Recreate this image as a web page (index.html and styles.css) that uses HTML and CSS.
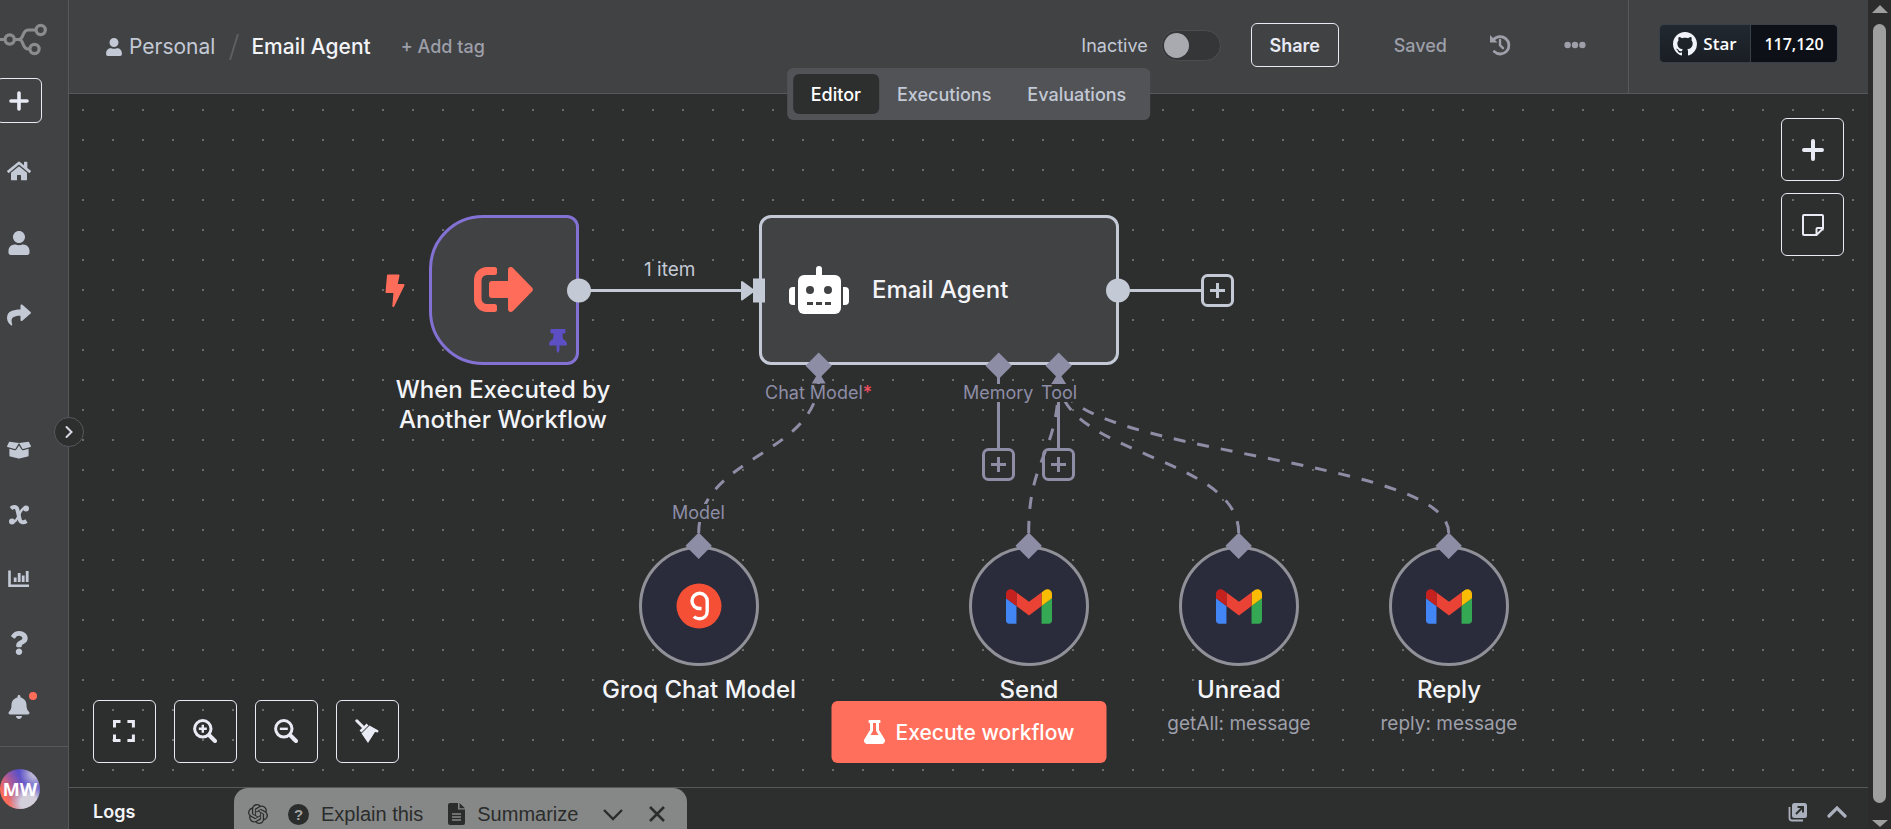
FILE: index.html
```html
<!DOCTYPE html>
<html lang="en">
<head>
<meta charset="utf-8">
<title>Email Agent</title>
<link rel="stylesheet" href="styles.css">
</head>
<body>
<div class="app">
  <aside class="sidebar">
    <nav class="rail" aria-label="Main">
      <svg class="logo" viewBox="0 0 48 36" fill="none" stroke="#8c8c8c" stroke-width="3.2"><circle cx="9.7" cy="19.500" r="4.6"/><circle cx="40.7" cy="10" r="4.6"/><circle cx="34.5" cy="29" r="4.6"/><path d="M-2 19.500H5M14.300 19.500H19c5 0 3-9.500 9-9.500h8M19 19.500c5 0 3 9.500 9 9.500h2"/></svg>
      <button class="rail-add" aria-label="Create"><svg class="i20" viewBox="0 0 20 20"><path d="M10 2v16M2 10h16" stroke="#e8eaf4" stroke-width="3.6" stroke-linecap="round"/></svg></button>
      <a class="rail-item main-item" href="#" aria-label="Overview"><svg class="i24" viewBox="0 0 576 512"><path d="M280.370 148.260L96 300.110V464a16 16 0 0 0 16 16l112.060-.290a16 16 0 0 0 15.920-16V368a16 16 0 0 1 16-16h64a16 16 0 0 1 16 16v95.640a16 16 0 0 0 16 16.050L464 480a16 16 0 0 0 16-16V300L295.670 148.260a12.190 12.190 0 0 0-15.300 0zM571.600 251.470L488 182.560V44.050a12 12 0 0 0-12-12h-56a12 12 0 0 0-12 12v72.610L318.470 43a48 48 0 0 0-61 0L4.340 251.470a12 12 0 0 0-1.600 16.900l25.500 31A12 12 0 0 0 45.150 301l235.220-193.740a12.190 12.190 0 0 1 15.300 0L530.900 301a12 12 0 0 0 16.900-1.600l25.500-31a12 12 0 0 0-1.700-16.930z"/></svg></a>
      <a class="rail-item main-item" href="#" aria-label="Personal"><svg class="i24" viewBox="0 0 448 512"><path d="M224 256c70.700 0 128-57.300 128-128S294.700 0 224 0 96 57.300 96 128s57.300 128 128 128zm89.600 32h-16.700c-22.200 10.200-46.900 16-72.900 16s-50.600-5.800-72.900-16h-16.700C60.200 288 0 348.200 0 422.400V464c0 26.500 21.500 48 48 48h352c26.500 0 48-21.500 48-48v-41.600c0-74.200-60.200-134.400-134.400-134.400z"/></svg></a>
      <a class="rail-item main-item" href="#" aria-label="Shared with you"><svg class="i24" viewBox="0 0 512 512"><path d="M503.691 189.836L327.687 37.851C312.281 24.546 288 35.347 288 56.015v80.053C127.371 137.907 0 170.100 0 322.326c0 61.441 39.581 122.309 83.333 154.132 13.653 9.931 33.111-2.533 28.077-18.631C66.066 312.814 132.917 274.316 288 272.085V360c0 20.700 24.300 31.453 39.687 18.164l176.004-152c11.071-9.562 11.086-26.753 0-36.328z"/></svg></a>
      <span class="spacer"></span>
      <a class="rail-item" href="#" aria-label="Templates"><svg class="i24" viewBox="0 20 640 512"><path d="M425.700 256c-16.900 0-32.800-9-41.400-23.400L320 126l-64.200 106.600c-8.700 14.500-24.600 23.500-41.500 23.500-4.500 0-9-.6-13.300-1.900L64 215v178c0 14.700 10 27.500 24.200 31l216.200 54.100c10.200 2.500 20.900 2.500 31 0L551.800 424c14.200-3.600 24.200-16.400 24.200-31V215l-137 39.100c-4.300 1.300-8.800 1.900-13.300 1.900zm212.600-112.200L586.800 41c-3.100-6.200-9.800-9.800-16.700-8.900L320 64l91.700 152.100c3.800 6.300 11.400 9.300 18.500 7.300l197.900-56.500c9.900-2.900 14.700-13.900 10.200-23.100zM53.200 41L1.700 143.800c-4.600 9.200.3 20.200 10.100 23l197.900 56.500c7.100 2 14.700-1 18.500-7.300L320 64 69.800 32.100c-6.900-.8-13.500 2.700-16.600 8.900z"/></svg></a>
      <a class="rail-item" href="#" aria-label="Variables"><svg class="i20" viewBox="0 0 20 20"><path d="M2 3.500C4.500 1.200 7.600 1.500 8.400 4.800l2.300 9.600c.8 3.300 3.800 3.600 6.800 1.600" fill="none" stroke="#c3c9d5" stroke-width="4"/><path d="M16.500 3c-3-.5-4.500 3-6.500 7s-3.500 7.500-6.500 7" fill="none" stroke="#c3c9d5" stroke-width="2.200"/><circle cx="17" cy="3.600" r="3"/><circle cx="3" cy="16.600" r="3"/></svg></a>
      <a class="rail-item" href="#" aria-label="Insights"><svg class="i22" viewBox="0 0 22 22"><path d="M1.500 2.500v15.300h19.500" fill="none" stroke="#c3c9d5" stroke-width="2.600"/><path d="M7.200 14v-4.500M11.200 14v-9M15.200 14v-6.500M19.200 14v-11" fill="none" stroke="#c3c9d5" stroke-width="2.800"/></svg></a>
      <a class="rail-item" href="#" aria-label="Help"><svg class="i24" viewBox="0 0 384 512"><path d="M202.021 0C122.202 0 70.503 32.703 29.914 91.026c-7.363 10.580-5.093 25.086 5.178 32.874l43.138 32.709c10.373 7.865 25.132 6.026 33.253-4.148 25.049-31.381 43.630-49.449 82.757-49.449 30.764 0 68.816 19.799 68.816 49.631 0 22.552-18.617 34.134-48.993 51.164-35.423 19.860-82.299 44.576-82.299 106.405V320c0 13.255 10.745 24 24 24h72.471c13.255 0 24-10.745 24-24v-5.773c0-42.860 125.268-44.645 125.268-160.627C377.504 66.256 286.902 0 202.021 0zM192 373.459c-38.196 0-69.271 31.075-69.271 69.271 0 38.195 31.075 69.270 69.271 69.270s69.271-31.075 69.271-69.271-31.075-69.270-69.271-69.270z"/></svg></a>
      <a class="rail-item bell" href="#" aria-label="What's new"><svg class="i24" viewBox="0 0 448 512"><path d="M224 512c35.320 0 63.970-28.650 63.970-64H160.030c0 35.350 28.650 64 63.970 64zm215.390-149.710c-19.320-20.760-55.470-51.990-55.470-154.290 0-77.700-54.480-139.900-127.940-155.160V32c0-17.670-14.320-32-31.980-32s-31.980 14.330-31.980 32v20.840C118.560 68.100 64.080 130.300 64.080 208c0 102.300-36.150 133.530-55.470 154.290-6 6.450-8.660 14.160-8.610 21.710.110 16.400 12.980 32 32.100 32h383.800c19.120 0 32-15.600 32.100-32 .050-7.550-2.610-15.270-8.610-21.710z"/></svg><span class="badge"></span></a>
    </nav>
    <div class="account"><button class="avatar">MW</button></div>
    <button class="expand" aria-label="Expand sidebar"><svg class="i14" viewBox="0 0 14 14"><path d="M4.500 2l5 5-5 5" fill="none" stroke="#d6d9e3" stroke-width="2" stroke-linecap="round"/></svg></button>
  </aside>

  <div class="workspace">
    <header class="topbar">
      <div class="crumbs">
        <a class="owner" href="#"><svg class="i18" viewBox="0 0 448 512"><path d="M224 256c70.700 0 128-57.300 128-128S294.700 0 224 0 96 57.300 96 128s57.300 128 128 128zm89.600 32h-16.700c-22.200 10.200-46.900 16-72.900 16s-50.600-5.800-72.900-16h-16.700C60.200 288 0 348.200 0 422.400V464c0 26.500 21.500 48 48 48h352c26.500 0 48-21.500 48-48v-41.600c0-74.200-60.200-134.400-134.400-134.400z"/></svg>Personal</a>
        <svg class="slash" viewBox="0 0 10 26"><path d="M9 0L1 26" stroke="#5e5f62" stroke-width="2"/></svg>
        <h1 class="title">Email Agent</h1>
        <button class="add-tag">+ Add tag</button>
      </div>
      <div class="actions">
        <label class="active-toggle" for="active">Inactive<input class="switch" id="active" type="checkbox"></label>
        <button class="share">Share</button>
        <span class="saved">Saved</span>
        <button class="icon-btn history" aria-label="History"><svg class="i22" viewBox="0 0 22 22" fill="none" stroke="#9d9fa9" stroke-width="2.800"><path d="M4.300 6A8.700 8.700 0 1 1 5.200 17.600" stroke-linecap="round"/><path d="M11 6v5.200l3 3" stroke-width="2.400" stroke-linecap="round"/><path d="M1 1v7.500h7.500z" fill="#9d9fa9" stroke="none"/></svg></button>
        <button class="icon-btn" aria-label="More"><svg class="i22" viewBox="0 0 22 22" fill="#9d9fa9"><circle cx="3.600" cy="11" r="3.200"/><circle cx="11" cy="11" r="3.200"/><circle cx="18.400" cy="11" r="3.200"/></svg></button>
      </div>
      <div class="github">
        <a class="gh-star" href="#"><svg class="i24" viewBox="0 0 16 16"><path fill="#f0f3f9" d="M8 0C3.580 0 0 3.580 0 8c0 3.540 2.290 6.530 5.470 7.590.4.070.55-.170.55-.380 0-.190-.010-.820-.010-1.490-2.010.370-2.530-.490-2.690-.940-.090-.230-.480-.940-.820-1.130-.280-.150-.680-.520-.010-.530.630-.010 1.080.580 1.230.820.720 1.210 1.870.870 2.330.660.070-.520.280-.870.510-1.070-1.780-.200-3.640-.890-3.640-3.950 0-.870.310-1.590.820-2.150-.080-.200-.360-1.020.080-2.120 0 0 .670-.210 2.200.820.640-.180 1.320-.270 2-.270.680 0 1.360.090 2 .270 1.530-1.040 2.200-.820 2.200-.820.440 1.100.160 1.920.080 2.120.510.560.820 1.270.820 2.150 0 3.070-1.870 3.750-3.650 3.950.290.250.540.730.540 1.480 0 1.070-.010 1.930-.010 2.200 0 .210.150.460.550.380A8.010 8.010 0 0 0 16 8c0-4.420-3.580-8-8-8z"/></svg>Star</a><a class="gh-count" href="#">117,120</a>
      </div>
    </header>

    <div class="tabs">
      <button class="tab active">Editor</button><button class="tab">Executions</button><button class="tab">Evaluations</button>
    </div>

    <main class="canvas">
      <svg class="edges" width="1799" height="693" viewBox="69 94 1799 693" fill="none">
        <g stroke="#c3c9d5" stroke-width="3"><path d="M590 290.500H744M1130 290.500H1201"/><rect x="1202.500" y="275.500" width="30" height="30" rx="5"/><path d="M1210 290.500h15M1217.500 283v15"/></g>
        <path d="M742 282v17.500l12-8.700z" fill="#c3c9d5" stroke="#c3c9d5" stroke-width="2" stroke-linejoin="round"/>
        <g stroke="#8d8da6" stroke-width="3">
          <g stroke-dasharray="12 12">
            <path d="M698.700 533C698.700 455.500 818.700 455.500 818.700 378"/>
            <path d="M1028.700 533C1028.700 455.500 1058.700 455.500 1058.700 378"/>
            <path d="M1238.700 533C1238.700 455.500 1058.700 455.500 1058.700 378"/>
            <path d="M1448.700 533C1448.700 455.500 1058.700 455.500 1058.700 378"/>
          </g>
          <path d="M998.500 376V449M1058.500 400V449"/>
          <rect x="983.500" y="449.500" width="30" height="30" rx="5"/><path d="M991 464.500h15M998.500 457v15"/>
          <rect x="1043.500" y="449.500" width="30" height="30" rx="5"/><path d="M1051 464.500h15M1058.500 457v15"/>
        </g>
        <path d="M818.700 372l7 11.500h-14zM1058.700 372l7.500 12h-15z" fill="#8d8da6"/>
      </svg>

      <svg class="bolt" viewBox="0 0 20 33"><path d="M3 1.500h10.500L11.500 11h7L8.300 32l1.200-14H1.500z" fill="#ff6d5a" stroke="#ff6d5a" stroke-width="2" stroke-linejoin="round"/></svg>

      <section class="node trigger">
        <svg class="trigger-icon" viewBox="0 0 60 46" fill="#ff6d5a"><path d="M20.500 0H13A13 13 0 0 0 0 13v19a13 13 0 0 0 13 13h7.500a2.500 2.500 0 0 0 2.500-2.500v-3A2.500 2.500 0 0 0 20.500 37H13a5.500 5.500 0 0 1-5.500-5.500v-18A5.500 5.500 0 0 1 13 8h7.500A2.500 2.500 0 0 0 23 5.500v-3A2.500 2.500 0 0 0 20.500 0z"/><path d="M18 14h16V3c0-3 3-4 5-2l19 19.500a3 3 0 0 1 0 4L39 44c-2 2-5 1-5-2V31H18a3 3 0 0 1-3-3V17a3 3 0 0 1 3-3z"/></svg>
        <svg class="pin" viewBox="0 0 384 512" fill="#5c4fc4"><path d="M298.028 214.267L285.793 96H328c13.255 0 24-10.745 24-24V24c0-13.255-10.745-24-24-24H56C42.745 0 32 10.745 32 24v48c0 13.255 10.745 24 24 24h42.207L85.972 214.267C37.465 236.820 0 277.261 0 328c0 13.255 10.745 24 24 24h136v104.007c0 1.242.289 2.467.845 3.578l24 48c2.941 5.882 11.364 5.893 14.311 0l24-48a8.008 8.008 0 0 0 .845-3.578V352h136c13.255 0 24-10.745 24-24-.001-51.183-37.983-91.420-85.973-113.733z"/></svg>
      </section>
      <p class="node-label trigger-label">When Executed by Another Workflow</p>
      <span class="item-count">1 item</span>

      <section class="node agent">
        <svg class="robot" viewBox="0 0 62 50" fill="#fff"><rect x="28" y="1" width="6" height="14" rx="3"/><path d="M16 10h31a6 6 0 0 1 6 6v27a6 6 0 0 1-6 6H16a6 6 0 0 1-6-6V16a6 6 0 0 1 6-6z"/><path d="M7 22v18H5a4 4 0 0 1-4-4V26a4 4 0 0 1 4-4zM55 22v18h2a4 4 0 0 0 4-4V26a4 4 0 0 0-4-4z"/><g fill="#414244"><circle cx="22" cy="25" r="4"/><circle cx="40" cy="25" r="4"/><path d="M19 37h6v3h-6zM28 37h6v3h-6zM37 37h6v3h-6z"/></g></svg>
        <span class="agent-name">Email Agent</span>
      </section>
      <span class="port chat-model">Chat Model<b class="required">*</b></span>
      <span class="port memory">Memory</span>
      <span class="port tool">Tool</span>
      <span class="port model">Model</span>

      <section class="sub groq">
        <div class="disc"><svg class="groq-icon" viewBox="0 0 46 46"><circle cx="23" cy="23" r="22.500" fill="#f55036"/><path d="M25.500 25.500h-2A7.600 7.600 0 1 1 31.200 18v10c0 5-3.500 7.700-7.700 7.700-2.200 0-4.200-.7-5.500-2.200" fill="none" stroke="#fff" stroke-width="3.400"/></svg></div>
        <p class="node-label">Groq Chat Model</p>
      </section>
      <section class="sub send">
        <div class="disc"><svg class="gmail" viewBox="52 42 88 66"><path fill="#4285f4" d="M58 108h14V74L52 59v43c0 3.320 2.690 6 6 6"/><path fill="#34a853" d="M120 108h14c3.320 0 6-2.690 6-6V59l-20 15"/><path fill="#fbbc04" d="M120 48v26l20-15v-8c0-7.420-8.470-11.650-14.400-7.200"/><path fill="#ea4335" d="M72 74V48l24 18 24-18v26L96 92"/><path fill="#c5221f" d="M52 51v8l20 15V48l-5.600-4.200c-5.940-4.450-14.400-.22-14.400 7.200"/></svg></div>
        <p class="node-label">Send</p>
      </section>
      <section class="sub unread">
        <div class="disc"><svg class="gmail" viewBox="52 42 88 66"><path fill="#4285f4" d="M58 108h14V74L52 59v43c0 3.320 2.690 6 6 6"/><path fill="#34a853" d="M120 108h14c3.320 0 6-2.690 6-6V59l-20 15"/><path fill="#fbbc04" d="M120 48v26l20-15v-8c0-7.420-8.470-11.650-14.400-7.200"/><path fill="#ea4335" d="M72 74V48l24 18 24-18v26L96 92"/><path fill="#c5221f" d="M52 51v8l20 15V48l-5.600-4.200c-5.940-4.450-14.400-.22-14.400 7.200"/></svg></div>
        <p class="node-label">Unread</p>
        <p class="node-sub">getAll: message</p>
      </section>
      <section class="sub reply">
        <div class="disc"><svg class="gmail" viewBox="52 42 88 66"><path fill="#4285f4" d="M58 108h14V74L52 59v43c0 3.320 2.690 6 6 6"/><path fill="#34a853" d="M120 108h14c3.320 0 6-2.690 6-6V59l-20 15"/><path fill="#fbbc04" d="M120 48v26l20-15v-8c0-7.420-8.470-11.650-14.400-7.200"/><path fill="#ea4335" d="M72 74V48l24 18 24-18v26L96 92"/><path fill="#c5221f" d="M52 51v8l20 15V48l-5.600-4.200c-5.940-4.450-14.400-.22-14.400 7.200"/></svg></div>
        <p class="node-label">Reply</p>
        <p class="node-sub">reply: message</p>
      </section>

      <svg class="edges" width="1799" height="693" viewBox="69 94 1799 693">
        <g fill="#c3c9d5"><circle cx="579" cy="290.500" r="12"/><circle cx="1118" cy="290.500" r="12"/><rect x="753" y="278.500" width="12" height="24"/></g>
        <path fill="#8d8da6" d="M818.700 352.500l13.200 13.200-13.200 13.200-13.200-13.200zM998.700 352.500l13.200 13.200-13.200 13.200-13.200-13.200zM1058.700 352.500l13.200 13.200-13.200 13.200-13.200-13.200zM698.700 532.500l13.200 13.200-13.200 13.200-13.200-13.200zM1028.700 532.500l13.200 13.200-13.200 13.200-13.200-13.200zM1238.700 532.500l13.200 13.200-13.200 13.200-13.200-13.200zM1448.700 532.500l13.200 13.200-13.200 13.200-13.200-13.200z"/>
      </svg>

      <div class="side-tools">
        <button class="tool-btn" aria-label="Add node"><svg class="i22" viewBox="0 0 22 22"><path d="M11 2v18M2 11h18" stroke="#e8eaf4" stroke-width="4" stroke-linecap="round"/></svg></button>
        <button class="tool-btn" aria-label="Add sticky note"><svg class="i22" viewBox="0 0 22 22" fill="none" stroke="#e8eaf4" stroke-width="2"><path d="M2 1h18a1 1 0 0 1 1 1v12.500L14.500 21H2a1 1 0 0 1-1-1V2a1 1 0 0 1 1-1zM21 14h-5.500a1 1 0 0 0-1 1v6"/></svg></button>
      </div>
      <div class="zoom-tools">
        <button class="tool-btn" aria-label="Fit view"><svg class="i22" viewBox="0 0 22 22" fill="none" stroke="#e8eaf4" stroke-width="3"><path d="M1.500 7.500V1.500h6M14.400 1.500h6v6M1.500 14.500v6h6M14.400 20.500h6v-6"/></svg></button>
        <button class="tool-btn" aria-label="Zoom in"><svg class="i24" viewBox="0 0 24 24" fill="none" stroke="#e8eaf4"><circle cx="9.800" cy="9.800" r="8.200" stroke-width="3"/><path d="M16.500 16.500l5.500 5.500" stroke-width="4" stroke-linecap="round"/><path d="M9.800 5.800v8M5.800 9.800h8" stroke-width="2.400"/></svg></button>
        <button class="tool-btn" aria-label="Zoom out"><svg class="i24" viewBox="0 0 24 24" fill="none" stroke="#e8eaf4"><circle cx="9.800" cy="9.800" r="8.200" stroke-width="3"/><path d="M16.500 16.500l5.500 5.500" stroke-width="4" stroke-linecap="round"/><path d="M5.800 9.800h8" stroke-width="2.400"/></svg></button>
        <button class="tool-btn" aria-label="Tidy up"><svg class="i24" viewBox="0 0 24 24"><path d="M1.800 1.800l6 6" stroke="#e8eaf4" stroke-width="3" stroke-linecap="round"/><path d="M12.500 5.500L5.500 12.500" stroke="#e8eaf4" stroke-width="2.600"/><path d="M14.500 6.500l9 5-.5 2-3-.5-7 11L6.500 14.500z" fill="#e8eaf4"/></svg></button>
      </div>
      <button class="execute"><svg class="i24" viewBox="0 0 448 512" fill="#fff"><path d="M437.200 403.500L320 215V64h8c13.300 0 24-10.700 24-24V24c0-13.300-10.700-24-24-24H120c-13.300 0-24 10.700-24 24v16c0 13.300 10.700 24 24 24h8v151L10.800 403.500C-18.500 450.600 15.300 512 70.900 512h306.200c55.700 0 89.400-61.500 60.100-108.500zM137.900 320l48.200-77.600c3.700-5.200 5.800-11.600 5.800-18.400V64h64v160c0 6.900 2.200 13.200 5.800 18.400l48.200 77.600h-172z"/></svg>Execute workflow</button>
    </main>

    <footer class="logs">
      <span class="logs-title">Logs</span>
      <div class="assist">
        <svg class="i20" viewBox="0 0 24 24" fill="#2b2c2c"><path d="M22.282 9.821a5.985 5.985 0 0 0-.516-4.911 6.046 6.046 0 0 0-6.510-2.900A6.065 6.065 0 0 0 4.981 4.182a5.985 5.985 0 0 0-3.998 2.900 6.046 6.046 0 0 0 .743 7.097 5.980 5.980 0 0 0 .511 4.911 6.051 6.051 0 0 0 6.515 2.900A5.985 5.985 0 0 0 13.260 24a6.056 6.056 0 0 0 5.772-4.206 5.989 5.989 0 0 0 3.998-2.900 6.056 6.056 0 0 0-.748-7.073zm-9.022 12.608a4.476 4.476 0 0 1-2.876-1.041l.142-.080 4.778-2.758a.795.795 0 0 0 .393-.681v-6.737l2.020 1.169a.071.071 0 0 1 .038.052v5.583a4.504 4.504 0 0 1-4.495 4.494zm-9.661-4.125a4.471 4.471 0 0 1-.535-3.014l.142.085 4.783 2.758a.771.771 0 0 0 .781 0l5.843-3.369v2.332a.080.080 0 0 1-.033.062L9.740 19.950a4.499 4.499 0 0 1-6.141-1.646zM2.341 7.896a4.485 4.485 0 0 1 2.366-1.973V11.600a.766.766 0 0 0 .388.677l5.814 3.354-2.020 1.169a.076.076 0 0 1-.071 0l-4.830-2.787A4.504 4.504 0 0 1 2.341 7.872zm16.596 3.856L13.104 8.364 15.119 7.200a.076.076 0 0 1 .071 0l4.830 2.791a4.494 4.494 0 0 1-.677 8.104v-5.677a.790.790 0 0 0-.407-.667zm2.011-3.023l-.142-.085-4.774-2.782a.776.776 0 0 0-.785 0L9.409 9.230V6.897a.066.066 0 0 1 .028-.062l4.830-2.787a4.499 4.499 0 0 1 6.680 4.660zM8.307 12.863l-2.020-1.164a.080.080 0 0 1-.038-.057V6.074a4.499 4.499 0 0 1 7.376-3.454l-.142.081L8.704 5.459a.795.795 0 0 0-.393.681zm1.098-2.365l2.602-1.500 2.607 1.500v2.999l-2.597 1.500-2.607-1.500Z"/></svg>
        <button class="assist-btn"><span class="q-dot">?</span>Explain this</button>
        <button class="assist-btn"><svg class="doc" viewBox="0 0 17 22"><path d="M2 0h8v6.500h7V20a2 2 0 0 1-2 2H2a2 2 0 0 1-2-2V2a2 2 0 0 1 2-2zM11.500 0L17 5.300h-5.500z" fill="#2b2c2c"/><path d="M4 11h9M4 14h9M4 17h9" stroke="#868887" stroke-width="1.300"/></svg>Summarize</button>
        <button class="assist-btn caret" aria-label="More"><svg class="i20" viewBox="0 0 20 20"><path d="M1 6l9 9 9-9" fill="none" stroke="#2b2c2c" stroke-width="2.400"/></svg></button>
        <button class="assist-btn close" aria-label="Close"><svg class="i16" viewBox="0 0 16 16"><path d="M1 1l14 14M15 1L1 15" stroke="#2b2c2c" stroke-width="2.600"/></svg></button>
      </div>
      <div class="logs-tools">
        <button class="icon-btn" aria-label="Pop out"><svg class="i20" viewBox="0 0 20 20"><path d="M1.500 5v11a2.500 2.500 0 0 0 2.500 2.500h11" fill="none" stroke="#aab0be" stroke-width="1.800"/><rect x="4" y="1" width="15" height="15" rx="2.500" fill="#aab0be"/><path d="M8 12l6.500-6.500M9.500 5h5.500v5.500" fill="none" stroke="#2d2e2e" stroke-width="2"/></svg></button>
        <button class="icon-btn" aria-label="Open panel"><svg class="i20" viewBox="0 0 20 20"><path d="M2 14l8-8 8 8" fill="none" stroke="#aab0be" stroke-width="3.200" stroke-linecap="round"/></svg></button>
      </div>
    </footer>
  </div>

  <div class="scrollbar" aria-hidden="true"><span class="arrow up"></span><span class="thumb"></span><span class="arrow down"></span></div>
</div>
</body>
</html>
```

FILE: styles.css
```css
* { box-sizing: border-box; }
body { margin: 0; background: #2d2e2e; font-family: Inter, "Liberation Sans", sans-serif; color: #f3f4f8; }
button { font: inherit; color: inherit; background: none; border: 0; padding: 0; cursor: pointer; white-space: nowrap; }
a { color: inherit; text-decoration: none; }
p, h1 { margin: 0; }
svg { display: block; flex: none; }
.i14 { width: 14px; height: 14px; }
.i16 { width: 16px; height: 16px; }
.i18 { width: 16px; height: 18px; }
.i20 { width: 20px; height: 20px; }
.i22 { width: 22px; height: 22px; }
.i24 { width: 24px; height: 24px; }

.app { display: flex; height: 100vh; overflow: hidden; }

/* Sidebar */
.sidebar { position: relative; z-index: 3; display: flex; flex-direction: column; flex: 0 0 69px; background: #414244; border-right: 1px solid #57585b; }
.rail { flex: 1; display: flex; flex-direction: column; align-items: center; width: 38px; padding: 20px 0 7px; fill: #c3c9d5; }
.logo { width: 48px; height: 36px; align-self: flex-start; }
.rail-add { width: 46px; height: 45px; margin: 22px 0 12px; border: 1px solid #e8eaf4; border-radius: 6px; display: grid; place-items: center; flex: none; }
.rail-item { display: grid; place-items: center; width: 38px; height: 64px; }
.main-item { height: 72px; }
.spacer { flex: 1; }
.bell { position: relative; }
.badge { position: absolute; left: 29px; top: 17px; width: 8px; height: 8px; border-radius: 50%; background: #ff6d5a; }
.account { height: 83px; padding-top: 22px; border-top: 1px solid #57585b; overflow: hidden; }
.avatar { width: 40px; height: 40px; border-radius: 50%; color: #fff; font: 700 18px/40px "Open Sans", sans-serif; background: radial-gradient(circle at 72% 85%, #d3d0dc 0 18%, transparent 45%), radial-gradient(circle at 88% 12%, #b9b4d8 0 8%, transparent 32%), linear-gradient(60deg, #ff6d5a 18%, #a85a9c 42%, #5b50c8 62%); }
.expand { position: absolute; left: 54px; top: 417px; width: 30px; height: 30px; border: 1px solid #57585b; border-radius: 50%; background: #2d2e2e; display: grid; place-items: center; }

/* Top bar */
.workspace { position: relative; flex: 1; min-width: 0; display: flex; flex-direction: column; }
.topbar { display: flex; align-items: stretch; height: 94px; background: #414244; border-bottom: 1px solid #57585b; font-size: 18px; font-weight: 500; }
.crumbs { flex: 1; display: flex; align-items: center; padding-left: 37px; }
.owner { display: flex; align-items: center; gap: 7px; font-size: 21px; font-weight: 400; color: #c3c9d5; fill: #c3c9d5; }
.slash { width: 10px; height: 26px; margin: 0 12px 0 14px; }
.title { font-size: 21px; font-weight: 500; }
.add-tag { margin-left: 30px; color: #9d9fa9; }
.actions { display: flex; align-items: center; padding: 0 42px 3px 0; color: #9d9fa9; }
.active-toggle { display: flex; align-items: center; gap: 13px; color: #c3c9d5; font-weight: 400; }
.switch { appearance: none; margin: 0; width: 60px; height: 31px; padding: 2px; border: 1px solid #4c4d50; border-radius: 16px; background: #353638; }
.switch::before { content: ""; display: block; width: 25px; height: 25px; border-radius: 50%; background: #a9a9b0; }
.share { width: 88px; height: 44px; margin: 0 55px 0 30px; border: 1px solid #e8eaf4; border-radius: 6px; color: #e8eaf4; font-weight: 600; }
.history { margin: 0 53px 0 42px; }
.github { display: flex; align-items: center; padding: 0 30px 6px; border-left: 1px solid #57585b; font: 600 17px "Open Sans", sans-serif; color: #fff; }
.gh-star, .gh-count { display: flex; align-items: center; justify-content: center; height: 39px; border: 1px solid #3a4049; }
.gh-star { gap: 6px; width: 92px; background: linear-gradient(#212830, #1a1e24); border-radius: 5px 0 0 5px; }
.gh-count { width: 87px; background: #0d1117; border-left: 0; border-radius: 0 5px 5px 0; font-size: 16px; }

.tabs { position: absolute; z-index: 2; top: 68px; left: 50%; translate: -50%; display: flex; padding: 6px; border-radius: 6px; background: #525356; font-size: 18px; font-weight: 500; color: #c3c9d5; }
.tab { height: 40px; padding: 0 18px; border-radius: 6px; }
.tab.active { background: #2d2e2e; color: #fff; }

/* Canvas */
.canvas { position: relative; flex: 1; overflow: hidden; background: #2d2e2e radial-gradient(circle at 14px 16px, #6a6b6b 0 1px, transparent 1px) 0 0 / 30px 30px; }
.edges { position: absolute; left: 0; top: 0; }
.bolt { position: absolute; left: 316px; top: 180px; width: 20px; height: 33px; }
.node { position: absolute; top: 121px; height: 150px; display: flex; align-items: center; background: #414244; border: 3px solid #c3c9d5; border-radius: 12px; }
.trigger { left: 360px; width: 150px; border-color: #8371d3; border-radius: 54px 12px 12px 54px; padding-left: 42px; }
.trigger-icon { width: 60px; height: 46px; }
.pin { position: absolute; right: 9px; bottom: 9px; width: 18px; height: 24px; }
.agent { left: 690px; width: 360px; padding-left: 26px; gap: 22px; }
.robot { width: 62px; height: 50px; }
.agent-name, .node-label { font-size: 24px; font-weight: 500; line-height: 30px; }
.node-label { text-align: center; }
.trigger-label { position: absolute; left: 314px; top: 281px; width: 240px; }
.item-count { position: absolute; left: 575px; top: 164px; font-size: 19px; line-height: 24px; color: #c3c9d5; }
.port { position: absolute; top: 290px; font-size: 18px; line-height: 18px; color: #8d8da6; background: #2d2e2e; }
.required { color: #f04f5f; font-weight: 500; }
.chat-model { left: 696px; }
.memory { left: 894px; }
.tool { left: 972px; }
.model { left: 603px; top: 410px; }
.sub { position: absolute; top: 452px; width: 240px; display: flex; flex-direction: column; align-items: center; }
.disc { width: 120px; height: 120px; margin-bottom: 9px; border: 3px solid #909198; border-radius: 50%; background: #2b2c3b; display: grid; place-items: center; }
.groq { left: 510px; }
.send { left: 840px; }
.unread { left: 1050px; }
.reply { left: 1260px; }
.groq-icon { width: 46px; height: 46px; }
.gmail { width: 46px; height: 35px; }
.node-sub { margin-top: 7px; font-size: 19px; line-height: 24px; color: #9d9fa9; }

.tool-btn { width: 63px; height: 63px; border: 1px solid #e8eaf4; border-radius: 6px; display: grid; place-items: center; }
.side-tools { position: absolute; top: 24px; right: 24px; display: grid; gap: 12px; }
.zoom-tools { position: absolute; bottom: 24px; left: 24px; display: flex; gap: 18px; }
.zoom-tools .tool-btn { padding: 0 2px 2px 0; }
.execute { position: absolute; bottom: 24px; left: 50%; translate: -50%; display: flex; align-items: center; justify-content: center; gap: 9px; width: 275px; height: 62px; border-radius: 6px; background: #ff6f5c; color: #fff; font-size: 21px; font-weight: 500; }

/* Logs bar */
.logs { display: flex; height: 42px; padding: 0 21px 0 24px; border-top: 1px solid #57585b; background: #2d2e2e; }
.logs-title { width: 141px; padding-top: 13px; font-size: 18px; line-height: 22px; font-weight: 600; }
.assist { display: flex; align-items: center; width: 453px; padding: 11px 22px 0 14px; border-radius: 14px 14px 0 0; background: #868887; color: #2b2c2c; font: 20px "Liberation Sans", sans-serif; }
.assist-btn { display: flex; align-items: center; gap: 12px; margin-left: 20px; }
.assist-btn + .assist-btn { margin-left: 25px; }
.assist .doc { width: 17px; height: 22px; }
.assist-btn.close { margin-left: auto; }
.q-dot { width: 21px; height: 21px; border-radius: 50%; background: #2b2c2c; color: #a2a4a3; font-size: 15px; font-weight: 700; line-height: 21px; }
.logs-tools { margin-left: auto; display: flex; align-items: center; gap: 19px; padding-top: 6px; }

/* Scrollbar */
.scrollbar { display: flex; flex-direction: column; align-items: center; justify-content: space-between; flex: 0 0 23px; padding: 5px 0 2px; background: #2c2c2c; }
.thumb { flex: 1; width: 13px; margin: 11px 0 17px; border-radius: 7px; background: #9f9f9f; }
.arrow { border: 8px solid transparent; border-width: 0 8px 8px; border-bottom-color: #9f9f9f; }
.arrow.down { border-width: 7px 8px 0; border-top-color: #9f9f9f; }
```
